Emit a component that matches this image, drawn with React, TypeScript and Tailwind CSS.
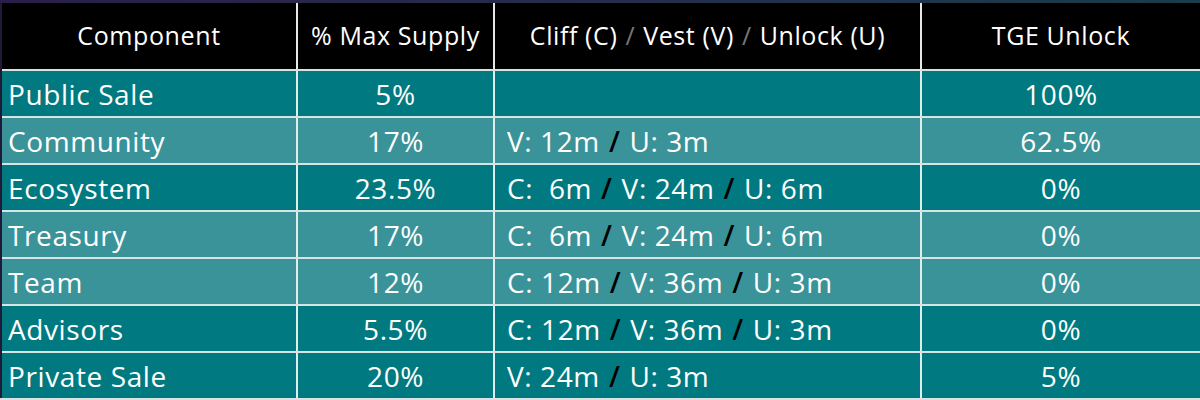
import React from 'react';

type Row = {
  name: string;
  supply: string;
  schedule: string[];
  tge: string;
  light: boolean;
};

const rows: Row[] = [
  { name: 'Public Sale', supply: '5%', schedule: [], tge: '100%', light: false },
  { name: 'Community', supply: '17%', schedule: ['V: 12m', 'U: 3m'], tge: '62.5%', light: true },
  { name: 'Ecosystem', supply: '23.5%', schedule: ['C:\u00a0 6m', 'V: 24m', 'U: 6m'], tge: '0%', light: false },
  { name: 'Treasury', supply: '17%', schedule: ['C:\u00a0 6m', 'V: 24m', 'U: 6m'], tge: '0%', light: true },
  { name: 'Team', supply: '12%', schedule: ['C: 12m', 'V: 36m', 'U: 3m'], tge: '0%', light: true },
  { name: 'Advisors', supply: '5.5%', schedule: ['C: 12m', 'V: 36m', 'U: 3m'], tge: '0%', light: false },
  { name: 'Private Sale', supply: '20%', schedule: ['V: 24m', 'U: 3m'], tge: '5%', light: false },
];

const Schedule: React.FC<{ parts: string[] }> = ({ parts }) => (
  <>
    {parts.map((p, i) => (
      <React.Fragment key={i}>
        {i > 0 && <span className="mx-[9px] font-semibold text-black">/</span>}
        <span>{p}</span>
      </React.Fragment>
    ))}
  </>
);

const App: React.FC = () => {
  return (
    <div
      className="w-[1200px] h-[400px] overflow-hidden bg-[#d6e4e4] text-white"
      style={{ fontFamily: '"Open Sans", Lato, sans-serif' }}
    >
      <div className="h-[3px] bg-gradient-to-r from-[#2a1e48] to-[#1a3c4c]" />
      <div className="flex border-l-2 border-[#1e1a38]">
        <div className="flex-1 flex flex-col gap-[2px]">
          {/* header */}
          <div className="grid grid-cols-[296px_197px_427px_1fr] h-[66px] bg-black text-[25px] tracking-[0.6px]">
            <div className="flex items-center justify-center border-r-2 border-[#e8e8e8]">Component</div>
            <div className="flex items-center justify-center whitespace-nowrap border-r-2 border-[#e8e8e8]">% Max Supply</div>
            <div className="flex items-center justify-center whitespace-nowrap border-r-2 border-[#e8e8e8]">
              Cliff (C)<span className="mx-[8px] text-[#777]">/</span>Vest (V)
              <span className="mx-[8px] text-[#777]">/</span>Unlock (U)
            </div>
            <div className="flex items-center justify-center">TGE Unlock</div>
          </div>

          {rows.map((r) => (
            <div
              key={r.name}
              className={`grid grid-cols-[296px_197px_427px_1fr] h-[45px] text-[28px] tracking-[0.6px] ${
                r.light ? 'bg-[#3a9399]' : 'bg-[#007a80]'
              }`}
            >
              <div className="flex items-center pl-[6px] border-r-2 border-[#e0eded]">{r.name}</div>
              <div className="flex items-center justify-center border-r-2 border-[#e0eded]">{r.supply}</div>
              <div className="flex items-center whitespace-nowrap pl-[12px] border-r-2 border-[#e0eded]">
                <Schedule parts={r.schedule} />
              </div>
              <div className="flex items-center justify-center">{r.tge}</div>
            </div>
          ))}
        </div>
      </div>
    </div>
  );
};

export default App;
